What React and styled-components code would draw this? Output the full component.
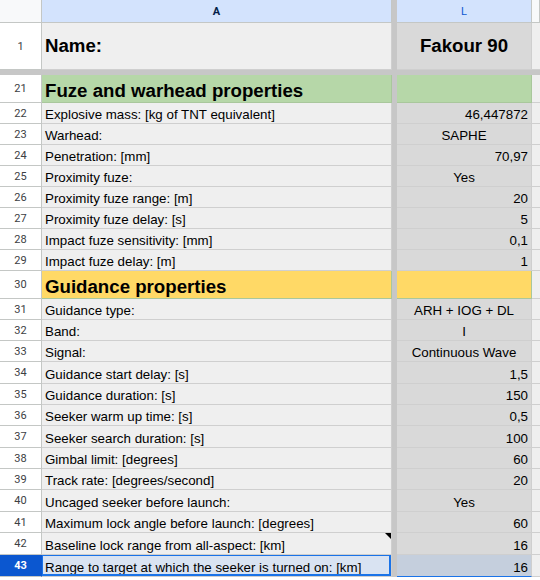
import styled, { createGlobalStyle, css } from 'styled-components';

const GlobalStyle = createGlobalStyle`
    html, body {
        margin: 0;
        padding: 0;
        background: #fff;
    }
    body {
        font-family: "Liberation Sans", Arial, sans-serif;
    }
`;

const COLS = '42px 350px 5px 135px 1fr';

const fills = {
    green: '#b6d7a8',
    yellow: '#ffd966',
};

const rows = [
    { n: 21, label: 'Fuze and warhead properties', section: 'green', h: 28 },
    { n: 22, label: 'Explosive mass: [kg of TNT equivalent]', value: '46,447872' },
    { n: 23, label: 'Warhead:', value: 'SAPHE', align: 'center' },
    { n: 24, label: 'Penetration: [mm]', value: '70,97' },
    { n: 25, label: 'Proximity fuze:', value: 'Yes', align: 'center' },
    { n: 26, label: 'Proximity fuze range: [m]', value: '20' },
    { n: 27, label: 'Proximity fuze delay: [s]', value: '5' },
    { n: 28, label: 'Impact fuze sensitivity: [mm]', value: '0,1' },
    { n: 29, label: 'Impact fuze delay: [m]', value: '1' },
    { n: 30, label: 'Guidance properties', section: 'yellow', h: 28 },
    { n: 31, label: 'Guidance type:', value: 'ARH + IOG + DL', align: 'center' },
    { n: 32, label: 'Band:', value: 'I', align: 'center' },
    { n: 33, label: 'Signal:', value: 'Continuous Wave', align: 'center' },
    { n: 34, label: 'Guidance start delay: [s]', value: '1,5', h: 22 },
    { n: 35, label: 'Guidance duration: [s]', value: '150' },
    { n: 36, label: 'Seeker warm up time: [s]', value: '0,5' },
    { n: 37, label: 'Seeker search duration: [s]', value: '100', h: 22 },
    { n: 38, label: 'Gimbal limit: [degrees]', value: '60' },
    { n: 39, label: 'Track rate: [degrees/second]', value: '20' },
    { n: 40, label: 'Uncaged seeker before launch:', value: 'Yes', align: 'center', h: 22 },
    { n: 41, label: 'Maximum lock angle before launch: [degrees]', value: '60' },
    { n: 42, label: 'Baseline lock range from all-aspect: [km]', value: '16', note: true, h: 22 },
    { n: 43, label: 'Range to target at which the seeker is turned on: [km]', value: '16', selected: true, h: 22 },
];

const App = () => {
    return (
        <>
            <GlobalStyle />
            <Sheet>
                <Row h={23}>
                    <Corner />
                    <ColHeader active>A</ColHeader>
                    <FreezeV />
                    <ColHeader>L</ColHeader>
                    <ColHeader $rest />
                </Row>
                <Row h={47}>
                    <RowNum>1</RowNum>
                    <Cell $valign="center" $big>Name:</Cell>
                    <FreezeV />
                    <Cell $col="L" $align="center" $valign="center" $big>Fakour 90</Cell>
                    <Cell $rest />
                </Row>
                <FreezeH />
                {rows.map((r) => (
                    <Row key={r.n} h={r.h || 21}>
                        <RowNum $selected={r.selected}>{r.n}</RowNum>
                        <Cell $fill={fills[r.section]} $big={!!r.section} $active={r.selected} $note={r.note}>
                            {r.label}
                        </Cell>
                        <FreezeV />
                        <Cell $col="L" $fill={fills[r.section]} $align={r.align || 'right'} $inRange={r.selected}>
                            {r.value}
                        </Cell>
                        <Cell $rest />
                    </Row>
                ))}
            </Sheet>
        </>
    );
};

export default App;

const Sheet = styled.div`
    width: 540px;
    height: 580px;
    overflow: hidden;
    background: #fff;
`;

const Row = styled.div`
    display: grid;
    grid-template-columns: ${COLS};
    height: ${(p) => p.h}px;
`;

const Corner = styled.div`
    background: #f8f9fa;
    border-right: 1px solid #c4c7c5;
    border-bottom: 1px solid #c4c7c5;
`;

const ColHeader = styled.div`
    display: flex;
    align-items: center;
    justify-content: center;
    background: ${(p) => (p.$rest ? '#f8f9fa' : '#d3e3fd')};
    border-right: 1px solid #c4c7c5;
    border-bottom: 1px solid #c4c7c5;
    font-family: Roboto, "Liberation Sans", sans-serif;
    font-size: 11px;
    color: ${(p) => (p.active ? '#041e49' : '#0b57d0')};
    font-weight: ${(p) => (p.active ? 700 : 400)};
`;

const FreezeV = styled.div`
    background: #c7c7c7;
`;

const FreezeH = styled.div`
    height: 5px;
    background: #c7c7c7;
`;

const RowNum = styled.div`
    display: flex;
    align-items: center;
    justify-content: center;
    background: #fff;
    border-right: 1px solid #c4c7c5;
    border-bottom: 1px solid #c4c7c5;
    font-family: Roboto, "Liberation Sans", sans-serif;
    font-size: 11px;
    color: #3c4043;

    ${(p) => p.$selected && css`
        background: #0b57d0;
        color: #fff;
        font-weight: 700;
        border-right-color: #0b57d0;
    `}
`;

const Cell = styled.div`
    position: relative;
    display: flex;
    align-items: ${(p) => (p.$valign === 'center' ? 'center' : 'flex-end')};
    justify-content: ${(p) => (p.$align === 'center' ? 'center' : p.$align === 'right' ? 'flex-end' : 'flex-start')};
    padding: 0 3px ${(p) => (p.$valign === 'center' ? 0 : 1)}px;
    box-sizing: border-box;
    overflow: hidden;
    white-space: nowrap;
    background: ${(p) => p.$fill || (p.$col === 'L' ? '#d9d9d9' : '#efefef')};
    border-right: 1px solid ${(p) => (p.$fill ? '#a9c79c' : '#cfcfcf')};
    border-bottom: 1px solid ${(p) => (p.$fill ? '#a9c79c' : '#cfcfcf')};
    font-size: ${(p) => (p.$big ? '18.67px' : '13.33px')};
    font-weight: ${(p) => (p.$big ? 700 : 400)};
    line-height: 1.15;
    color: #000;

    ${(p) => p.$rest && css`
        background: #efefef;
        border-right: none;
    `}

    ${(p) => p.$note && css`
        &::after {
            content: '';
            position: absolute;
            top: 0;
            right: 0;
            border-top: 6px solid #000;
            border-left: 6px solid transparent;
        }
    `}

    ${(p) => p.$active && css`
        background: #d9e3f2;
        &::before {
            content: '';
            position: absolute;
            inset: -1px 0 0 -1px;
            border: 2px solid #1a73e8;
            pointer-events: none;
        }
    `}

    ${(p) => p.$inRange && css`
        background: #c5cfdd;
        border-bottom-color: #1a73e8;
        &::before {
            content: '';
            position: absolute;
            top: -1px;
            left: 0;
            right: 0;
            border-top: 1px solid #1a73e8;
        }
    `}
`;
